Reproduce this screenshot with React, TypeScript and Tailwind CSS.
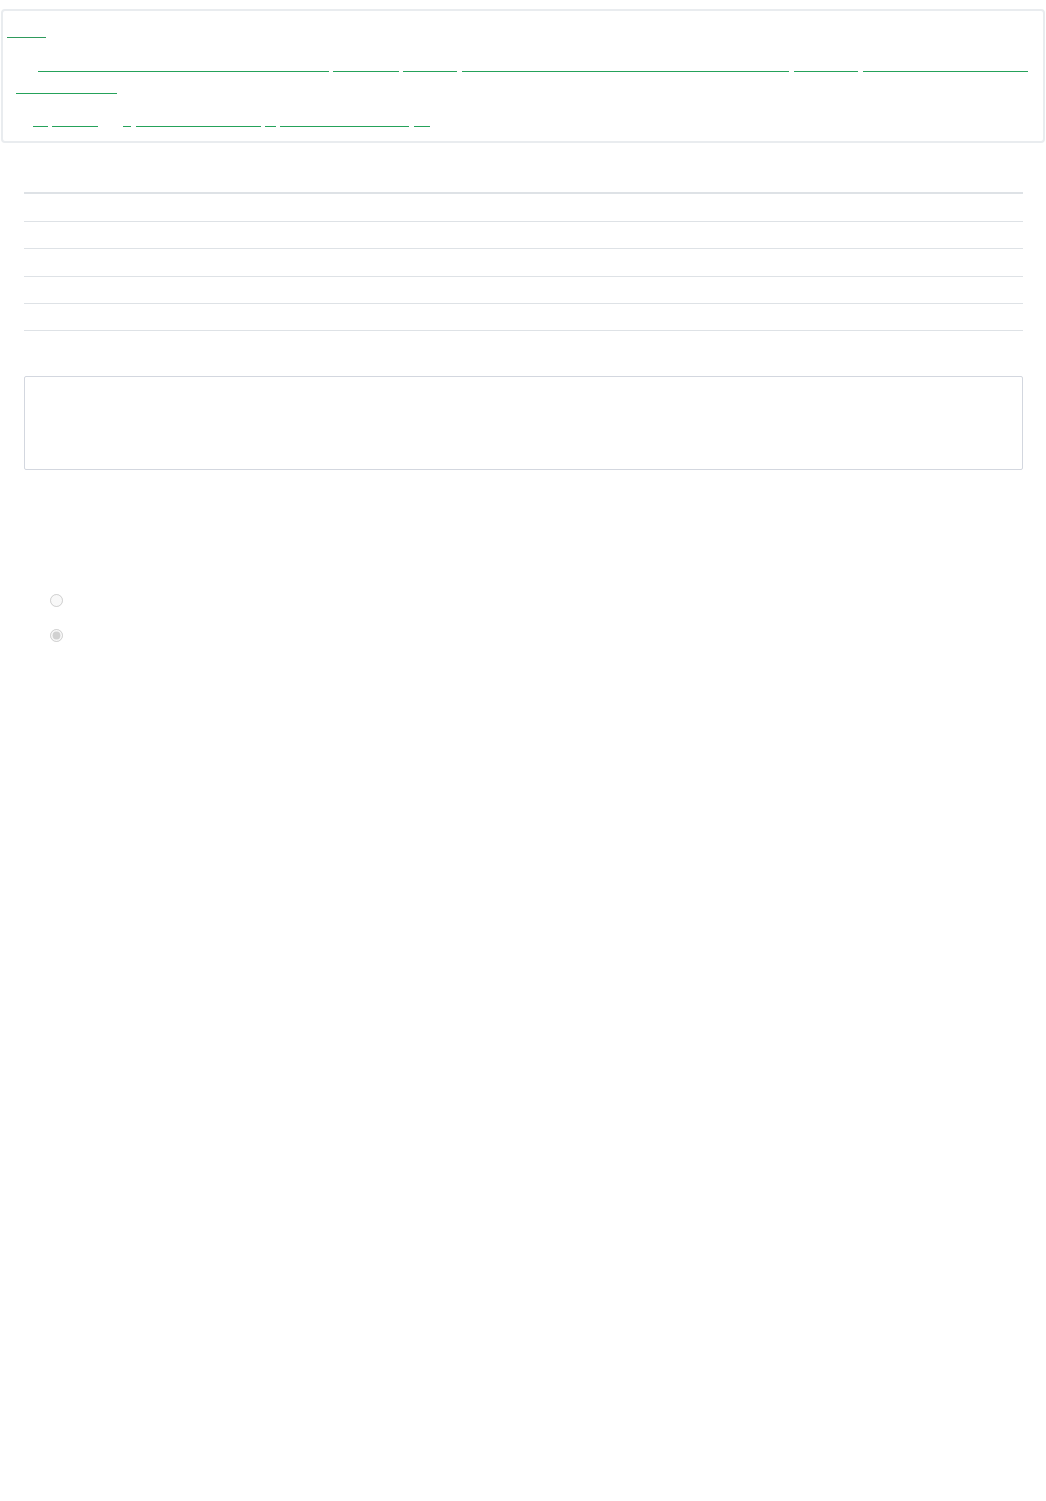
import React from "react";

export default function App() {
  const g = "h-px bg-[#25a25a] shrink-0";
  return (
    <div className="w-[1046px] min-h-[1501px] bg-white font-['Liberation_Sans',Arial,sans-serif]">
      {/* Header card */}
      <div className="pt-[9px] pl-[1px]">
        <div className="w-[1044px] h-[134px] border-2 border-[#e9ecef] rounded-[4px] bg-white">
          <div className="flex mt-[26px]">
            <a href="#" aria-label="link" className="h-px bg-[#2f9a5c] ml-[4px] w-[39px]" />
          </div>
          <div className="flex mt-[33px]">
            <a href="#" aria-label="link" className={`${g} ml-[35px] w-[291px]`} />
            <a href="#" aria-label="link" className={`${g} ml-[4px] w-[66px]`} />
            <a href="#" aria-label="link" className={`${g} ml-[4px] w-[54px]`} />
            <a href="#" aria-label="link" className={`${g} ml-[5px] w-[327px]`} />
            <a href="#" aria-label="link" className={`${g} ml-[5px] w-[64px]`} />
            <a href="#" aria-label="link" className={`${g} ml-[5px] w-[165px]`} />
          </div>
          <div className="flex mt-[21px]">
            <a href="#" aria-label="link" className={`${g} ml-[13px] w-[101px]`} />
          </div>
          <div className="flex mt-[32px]">
            <a href="#" aria-label="link" className={`${g} ml-[30px] w-[15px]`} />
            <a href="#" aria-label="link" className={`${g} ml-[4px] w-[46px]`} />
            <a href="#" aria-label="link" className={`${g} ml-[25px] w-[8px]`} />
            <a href="#" aria-label="link" className={`${g} ml-[5px] w-[125px]`} />
            <a href="#" aria-label="link" className={`${g} ml-[4px] w-[11px]`} />
            <a href="#" aria-label="link" className={`${g} ml-[4px] w-[129px]`} />
            <a href="#" aria-label="link" className={`${g} ml-[5px] w-[16px]`} />
          </div>
        </div>
      </div>

      {/* Table */}
      <div className="ml-[24px] w-[999px] mt-[49px]">
        <div className="border-b-2 border-[#dee2e6]" />
        <div className="h-[28px] border-b border-[#dee2e6]" />
        <div className="h-[27px] border-b border-[#dee2e6]" />
        <div className="h-[28px] border-b border-[#dee2e6]" />
        <div className="h-[27px] border-b border-[#dee2e6]" />
        <div className="h-[27px] border-b border-[#dee2e6]" />
      </div>

      {/* Box */}
      <div className="ml-[24px] w-[999px] h-[94px] mt-[45px] border border-[#d3d7df] rounded-[2px] bg-white" />

      {/* Radios */}
      <div className="ml-[50px] mt-[124px] flex flex-col">
        <input type="radio" name="opt" disabled className="w-[13px] h-[13px] m-0 block" />
        <input type="radio" name="opt" disabled defaultChecked className="w-[13px] h-[13px] m-0 mt-[22px] block" />
      </div>
    </div>
  );
}
